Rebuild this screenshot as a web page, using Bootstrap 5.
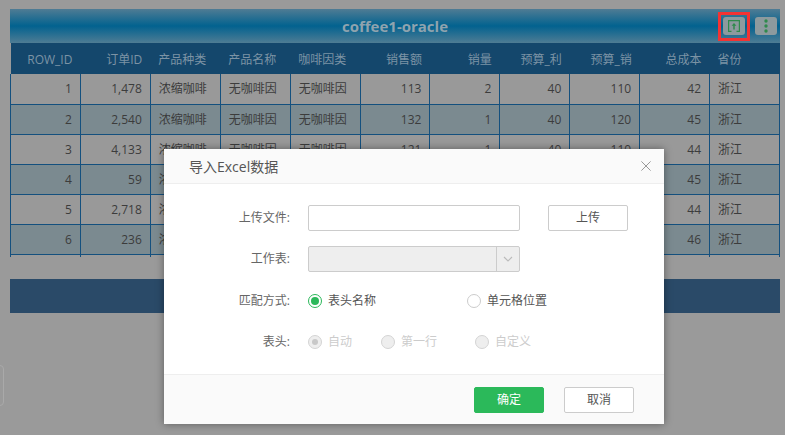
<!DOCTYPE html>
<html lang="zh">
<head>
<meta charset="utf-8">
<title>coffee1-oracle</title>
<link href="https://cdn.jsdelivr.net/npm/bootstrap@5.3.0/dist/css/bootstrap.min.css" rel="stylesheet">
<style>
html,body{height:100%}
body{background:#9a9a9a;font-family:"Open Sans","Noto Sans CJK SC",sans-serif;font-size:12px;color:#333;overflow:hidden;position:relative}
.sheet{padding:9px 5px 0 10px;width:785px}
.title-bar{height:34px;background:linear-gradient(#4f7c94,#02628f 50%,#4f7c94);position:relative}
.title-text{color:#8fa3ae;font-size:15px;font-weight:700;line-height:35px}
.tool-btn{width:22px;height:18px;background:#8d9a9e;border-radius:3px;position:absolute;top:8px}
.tool-import{left:713px}
.tool-more{left:745px}
.tool-mark{position:absolute;left:708px;top:3px;width:32px;height:29px;border:3px solid #f43333}
.data-table{table-layout:fixed;width:770px;margin:0;border-collapse:collapse}
.data-table th{height:31px;background:#14476c;color:#7c93a5;font-weight:400;padding:2px 8px 0;border:0;vertical-align:middle}
.data-table td{height:30px;padding:1px 8px 0;border:1px solid #14507e;background:#999;color:#3c3c3c;line-height:1;vertical-align:middle}
.data-table tr.alt td{background:#7b8a90}
.data-table tbody tr:first-child td{border-top:0}
.col-num{text-align:right}
.data-table tr.stub td{height:3px;padding:0;background:#9a9a9a;border-bottom:0}
.foot-bar{height:34px;background:#2a4a68;margin-top:22px;width:770px}
.side-tab{position:absolute;left:-8px;top:365px;width:12px;height:41px;border:1px solid #a9a9a9;border-radius:4px}
.dialog{position:absolute;left:164px;top:149px;width:500px;height:275px;border:0;border-radius:0;background:#fff;box-shadow:0 0 8px rgba(0,0,0,.4);color:#555}
.dialog .modal-header{height:35px;padding:0 13px 0 25px;background:#fafafa;border-bottom:1px solid #eee;border-radius:0}
.dialog-title{font-size:14px;color:#555}
.close-x{width:10px;height:10px;padding:0;border:0;background:none;line-height:0}
.dialog .modal-body{padding:21px 0 0;height:190px;flex:none}
.form-line{display:flex;align-items:center;height:26px;margin-bottom:15px}
.form-line.gap-after{margin-bottom:16px}
.line-label{width:126px;text-align:right;margin-right:18px;color:#666}
.plain-input{width:212px;height:26px;border:1px solid #ccc;border-radius:2px;background:#fff}
.upload-btn{width:80px;height:26px;margin-left:28px;padding:0;font-size:12px;line-height:1;border:1px solid #ccc;border-radius:2px;background:#fff;color:#555}
.select-box{width:212px;height:26px;border:1px solid #ccc;border-radius:2px;background:#eee;display:flex;justify-content:flex-end}
.select-arrow{width:23px;border-left:1px solid #ccc;display:flex;align-items:center;justify-content:center}
.radio-item{display:flex;align-items:center;gap:6px}
.dot{width:14px;height:14px;border-radius:50%;border:1px solid #ccc;background:#fff;display:flex;align-items:center;justify-content:center;flex:none}
.dot.on{border-color:#2bb85a}
.dot.on::after{content:"";width:8px;height:8px;border-radius:50%;background:#2bb85a}
.dot.off{background:#eee;border-color:#d4d4d4}
.dot.off.picked::after{content:"";width:6px;height:6px;border-radius:50%;background:#c8c8c8}
.radio-item.muted-item{color:#ccc}
.w-a{width:159px}.w-b{width:73px}.w-c{width:94px}
.dialog .modal-footer{height:50px;padding:12px 30px 0 0;background:#fafafa;border-top:1px solid #eee;border-radius:0;align-items:flex-start;flex:none;gap:20px}
.dialog .modal-footer .btn{margin:0;width:70px;height:26px;padding:0;font-size:12px;line-height:1;border-radius:2px}
.ok-btn{background:#2bb95a;border:1px solid #2bb95a;color:#fff}
.cancel-btn{background:#fff;border:1px solid #ccc;color:#555}
</style>
</head>
<body>
<div class="sheet">
  <div class="title-bar text-center">
    <span class="title-text">coffee1-oracle</span>
    <div class="tool-btn tool-import d-flex align-items-center justify-content-center">
      <svg width="12" height="12" viewBox="0 0 12 12" fill="none"><path d="M3.5.6H.6v10.8h2.9M8.5.6h2.9v10.8H8.5M.6.6h10.8" stroke="#2f8a4c" stroke-width="1.2"/><path d="M6 9.5V5" stroke="#2f8a4c" stroke-width="1.5"/><path d="M3.6 5.8 6 3l2.4 2.8z" fill="#2f8a4c"/></svg>
    </div>
    <div class="tool-mark"></div>
    <div class="tool-btn tool-more d-flex flex-column align-items-center justify-content-center">
      <svg width="4" height="14" viewBox="0 0 4 14"><circle cx="2" cy="2" r="1.7" fill="#2f8a4c"/><circle cx="2" cy="7" r="1.7" fill="#2f8a4c"/><circle cx="2" cy="12" r="1.7" fill="#2f8a4c"/></svg>
    </div>
  </div>
  <table class="table data-table">
    <thead>
      <tr>
        <th class="col-num">ROW_ID</th><th class="col-num">订单ID</th><th>产品种类</th><th>产品名称</th><th>咖啡因类</th><th class="col-num">销售额</th><th class="col-num">销量</th><th class="col-num">预算_利</th><th class="col-num">预算_销</th><th class="col-num">总成本</th><th>省份</th>
      </tr>
    </thead>
    <tbody>
      <tr><td class="col-num">1</td><td class="col-num">1,478</td><td>浓缩咖啡</td><td>无咖啡因</td><td>无咖啡因</td><td class="col-num">113</td><td class="col-num">2</td><td class="col-num">40</td><td class="col-num">110</td><td class="col-num">42</td><td>浙江</td></tr>
      <tr class="alt"><td class="col-num">2</td><td class="col-num">2,540</td><td>浓缩咖啡</td><td>无咖啡因</td><td>无咖啡因</td><td class="col-num">132</td><td class="col-num">1</td><td class="col-num">40</td><td class="col-num">120</td><td class="col-num">45</td><td>浙江</td></tr>
      <tr><td class="col-num">3</td><td class="col-num">4,133</td><td>浓缩咖啡</td><td>无咖啡因</td><td>无咖啡因</td><td class="col-num">121</td><td class="col-num">1</td><td class="col-num">40</td><td class="col-num">110</td><td class="col-num">44</td><td>浙江</td></tr>
      <tr class="alt"><td class="col-num">4</td><td class="col-num">59</td><td>浓缩咖啡</td><td>无咖啡因</td><td>无咖啡因</td><td class="col-num">132</td><td class="col-num">1</td><td class="col-num">40</td><td class="col-num">120</td><td class="col-num">45</td><td>浙江</td></tr>
      <tr><td class="col-num">5</td><td class="col-num">2,718</td><td>浓缩咖啡</td><td>无咖啡因</td><td>无咖啡因</td><td class="col-num">121</td><td class="col-num">1</td><td class="col-num">40</td><td class="col-num">110</td><td class="col-num">44</td><td>浙江</td></tr>
      <tr class="alt"><td class="col-num">6</td><td class="col-num">236</td><td>浓缩咖啡</td><td>无咖啡因</td><td>无咖啡因</td><td class="col-num">132</td><td class="col-num">1</td><td class="col-num">40</td><td class="col-num">120</td><td class="col-num">46</td><td>浙江</td></tr>
      <tr class="stub"><td></td><td></td><td></td><td></td><td></td><td></td><td></td><td></td><td></td><td></td><td></td></tr>
    </tbody>
  </table>
  <div class="foot-bar"></div>
</div>
<div class="side-tab"></div>

<div class="modal-content dialog">
  <div class="modal-header">
    <span class="dialog-title">导入Excel数据</span>
    <button type="button" class="close-x" aria-label="Close"><svg width="10" height="10" viewBox="0 0 10 10" fill="none"><path d="M.4.4l9.2 9.2M9.6.4.4 9.6" stroke="#999" stroke-width="1"/></svg></button>
  </div>
  <div class="modal-body">
    <div class="form-line">
      <div class="line-label">上传文件:</div>
      <div class="plain-input"></div>
      <button type="button" class="btn upload-btn">上传</button>
    </div>
    <div class="form-line gap-after">
      <div class="line-label">工作表:</div>
      <div class="select-box">
        <div class="select-arrow"><svg width="10" height="6" viewBox="0 0 10 6" fill="none"><path d="M1 1l4 4 4-4" stroke="#bbb" stroke-width="1.1"/></svg></div>
      </div>
    </div>
    <div class="form-line">
      <div class="line-label">匹配方式:</div>
      <div class="radio-item w-a"><span class="dot on"></span>表头名称</div>
      <div class="radio-item"><span class="dot"></span>单元格位置</div>
    </div>
    <div class="form-line">
      <div class="line-label">表头:</div>
      <div class="radio-item muted-item w-b"><span class="dot off picked"></span>自动</div>
      <div class="radio-item muted-item w-c"><span class="dot off"></span>第一行</div>
      <div class="radio-item muted-item"><span class="dot off"></span>自定义</div>
    </div>
  </div>
  <div class="modal-footer">
    <button type="button" class="btn ok-btn">确定</button>
    <button type="button" class="btn cancel-btn">取消</button>
  </div>
</div>
<script src="https://cdn.jsdelivr.net/npm/bootstrap@5.3.0/dist/js/bootstrap.bundle.min.js"></script>
</body>
</html>
